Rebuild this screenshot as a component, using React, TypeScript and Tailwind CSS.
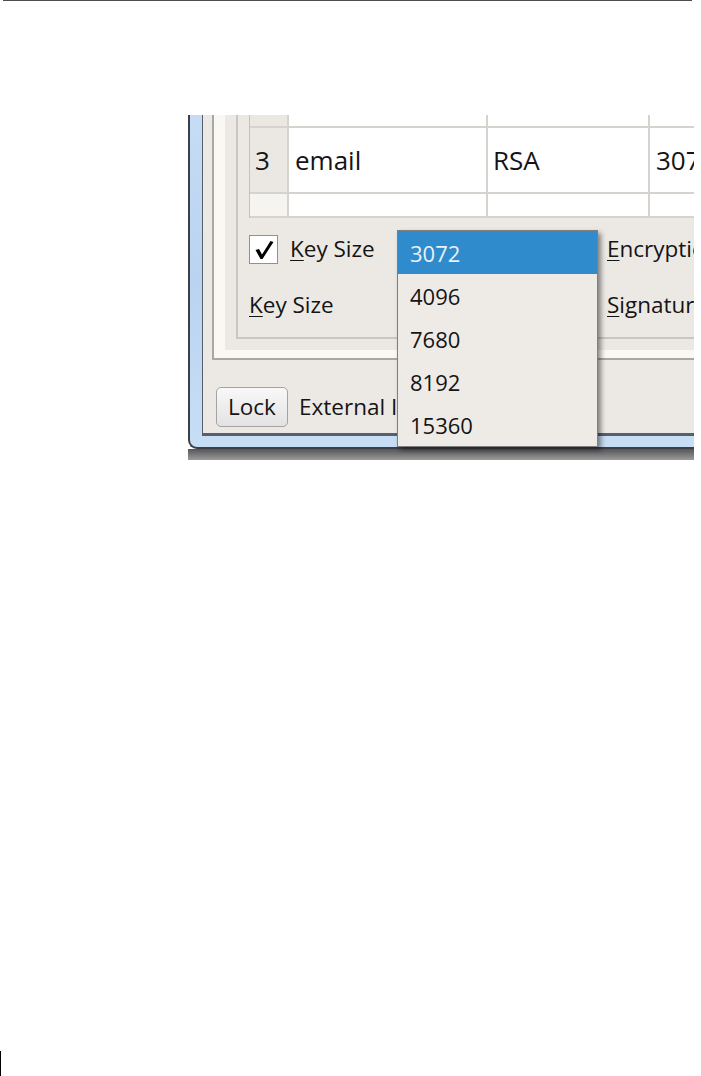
import React from "react";

const font = { fontFamily: '"Open Sans", "Noto Sans", sans-serif' };

function U({ c }: { c: string }) {
  return <span className="underline decoration-1 underline-offset-[3px]">{c}</span>;
}

export default function App() {
  return (
    <div className="w-[701px] min-h-[1076px] bg-white" style={font}>
      <div className="ml-[3px] w-[689px] h-px bg-[#4d4d4d]" />
      <div className="relative ml-[188px] mt-[114px] w-[506px] h-[345px] overflow-hidden">
        <div className="flex flex-col">
          <div className="h-[334px] border-l-2 border-b-2 border-[#3b4048] rounded-bl-[9px] bg-gradient-to-b from-[#c6dcf4] via-[#b9d3f0] to-[#c8def5] pl-[12px] pb-[11px]">
            <div className="h-full border-l border-b-[3px] border-[#56606c] bg-[#ece9e5] flex flex-col">
              <div className="ml-[9px] h-[245px] border-l-2 border-b-2 border-[#aaa7a2] bg-[#faf8f5] pl-[11px] pb-[8px]">
                <div className="h-full bg-[#ece9e5] pl-[11px] pb-[11px]">
                  <div className="h-full border-l-2 border-b-2 border-[#cac6c1] pl-[11px] flex flex-col">
                    <div className="border-l border-[#c4c0bb] text-[26px] text-[#141414] leading-none">
                      <div className="flex h-[13px]">
                        <div className="w-[39px] shrink-0 bg-[#ebe8e4] border-r-2 border-b-2 border-[#d6d3ce]" />
                        <div className="w-[199px] shrink-0 bg-white border-r-2 border-b-2 border-[#d6d3ce]" />
                        <div className="w-[162px] shrink-0 bg-white border-r-2 border-b-2 border-[#d6d3ce]" />
                        <div className="w-[200px] shrink-0 bg-white border-b-2 border-[#d6d3ce]" />
                      </div>
                      <div className="flex h-[66px]">
                        <div className="w-[39px] shrink-0 bg-[#ebe8e4] border-r-2 border-b-2 border-[#d6d3ce] flex items-center pl-[5px]">3</div>
                        <div className="w-[199px] shrink-0 bg-white border-r-2 border-b-2 border-[#d6d3ce] flex items-center pl-[6px]">email</div>
                        <div className="w-[162px] shrink-0 bg-white border-r-2 border-b-2 border-[#d6d3ce] flex items-center pl-[5px]">RSA</div>
                        <div className="w-[200px] shrink-0 bg-white border-b-2 border-[#d6d3ce] flex items-center pl-[6px]">3072</div>
                      </div>
                      <div className="flex h-[24px]">
                        <div className="w-[39px] shrink-0 bg-[#f6f4f1] border-r-2 border-b-2 border-[#d6d3ce]" />
                        <div className="w-[199px] shrink-0 bg-white border-r-2 border-b-2 border-[#d6d3ce]" />
                        <div className="w-[162px] shrink-0 bg-white border-r-2 border-b-2 border-[#d6d3ce]" />
                        <div className="w-[200px] shrink-0 bg-white border-b-2 border-[#d6d3ce]" />
                      </div>
                    </div>
                    <div className="pt-[17px] text-[22.5px] text-[#141414] leading-none">
                      <div className="grid grid-cols-[147px_211px_200px] h-[29px] items-center">
                        <div className="flex items-center">
                          <div className="w-[29px] h-[29px] border border-[#8f9090] bg-white flex items-center justify-center">
                            <svg width="22" height="22" viewBox="0 0 22 22">
                              <path d="M2.5 11 L6 10 L9 15.5 L17.5 2 L20.5 3 L9.5 20 L7.5 20 Z" fill="#000" />
                            </svg>
                          </div>
                          <span className="ml-[12px] whitespace-nowrap"><U c="K" />ey Size</span>
                        </div>
                        <div />
                        <div className="whitespace-nowrap"><U c="E" />ncryption</div>
                      </div>
                      <div className="grid grid-cols-[147px_211px_200px] h-[29px] items-center mt-[27px]">
                        <div className="whitespace-nowrap"><U c="K" />ey Size</div>
                        <div />
                        <div className="whitespace-nowrap"><U c="S" />ignature</div>
                      </div>
                    </div>
                  </div>
                </div>
              </div>
              <div className="mt-[27px] ml-[13px] flex items-center text-[22.5px] text-[#141414] leading-none">
                <div className="w-[72px] h-[40px] rounded-[5px] border border-[#a3a3a3] bg-gradient-to-b from-[#f8f8f8] to-[#e3e3e3] flex items-center justify-center">Lock</div>
                <span className="ml-[11px] whitespace-nowrap">External Interface</span>
              </div>
            </div>
          </div>
          <div className="h-[11px] bg-gradient-to-b from-[#565656] to-[#9c9c9c]" />
        </div>
        <div className="absolute left-[209px] top-[115px] w-[201px] h-[217px] border border-[#7f7f7f] bg-[#eeebe7] shadow-[3px_3px_5px_rgba(0,0,0,0.45)] flex flex-col text-[22px] leading-none text-[#141414]">
          <div className="h-[43px] bg-[#2f8bcb] text-[#e8f1f9] flex items-center pl-[12px]">3072</div>
          <div className="h-[43px] flex items-center pl-[12px]">4096</div>
          <div className="h-[43px] flex items-center pl-[12px]">7680</div>
          <div className="h-[43px] flex items-center pl-[12px]">8192</div>
          <div className="h-[43px] flex items-center pl-[12px]">15360</div>
        </div>
      </div>
      <div className="mt-[591px] w-px h-[25px] bg-black" />
    </div>
  );
}
